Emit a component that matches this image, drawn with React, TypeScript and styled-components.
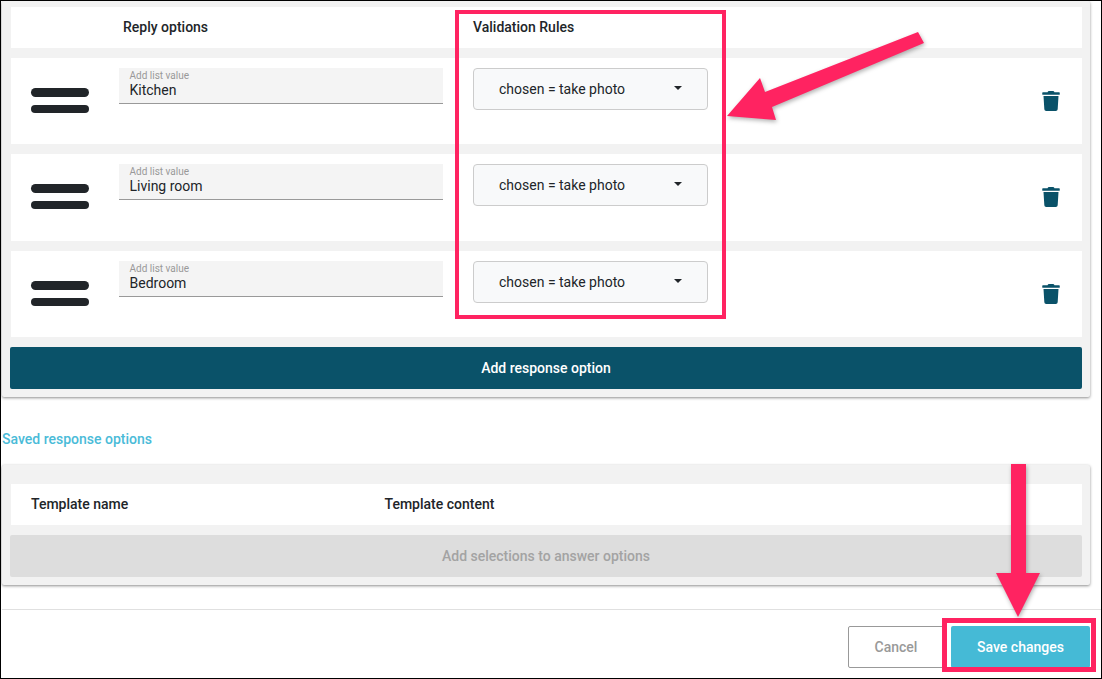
import React from 'react';
import styled, { createGlobalStyle } from 'styled-components';
import { FaTrash } from 'react-icons/fa';

const GlobalStyle = createGlobalStyle`
  html, body {
    margin: 0;
    padding: 0;
    background: #fff;
  }
  * {
    box-sizing: border-box;
  }
`;

const Frame = styled.div`
  position: relative;
  width: 1102px;
  height: 679px;
  overflow: hidden;
  border: 1px solid #000;
  background: #fff;
  font-family: Roboto, "Liberation Sans", sans-serif;
  font-size: 14px;
  color: #212529;
`;

const Content = styled.div`
  width: 1089px;
  padding-left: 1px;
`;

const Panel = styled.section<{ $top: number; $bottom: number }>`
  display: flex;
  flex-direction: column;
  gap: 10px;
  padding: ${(p) => p.$top}px 8px ${(p) => p.$bottom}px 8px;
  background: #f2f2f2;
  border-radius: 2px;
  box-shadow: 0 1px 3px rgba(0, 0, 0, 0.45);
`;

const HeaderRow = styled.div`
  display: flex;
  align-items: center;
  height: 41px;
  margin-left: 1px;
  padding-bottom: 2px;
  background: #fff;
  font-weight: 500;
`;

const HeaderCell = styled.div<{ $width: number }>`
  width: ${(p) => p.$width}px;
  flex: none;
`;

const OptionRow = styled.div<{ $height: number }>`
  display: grid;
  grid-template-columns: 108px 324px 30px 235px 1fr;
  height: ${(p) => p.$height}px;
  margin-left: 1px;
  padding-top: 10px;
  background: #fff;
`;

const Handle = styled.div`
  display: flex;
  flex-direction: column;
  gap: 8px;
  width: 58px;
  margin: 20px 0 0 20px;
`;

const HandleBar = styled.span`
  display: block;
  height: 8.5px;
  border-radius: 5px;
  background: #212529;
`;

const Field = styled.div`
  height: 36px;
  padding: 2px 10.5px 0;
  background: #f4f4f4;
  border-bottom: 1px solid #999;
`;

const FieldLabel = styled.div`
  font-size: 10px;
  line-height: 11px;
  color: #999;
`;

const FieldValue = styled.div`
  margin-top: 1px;
  font-size: 14px;
  line-height: 17px;
`;

const Select = styled.div`
  grid-column: 4;
  display: flex;
  align-items: center;
  justify-content: space-between;
  height: 42px;
  padding: 0 25px;
  background: #f8f9fa;
  border: 1px solid #ccc;
  border-radius: 4px;
`;

const Caret = styled.span`
  width: 0;
  height: 0;
  margin-top: -2px;
  border-left: 4px solid transparent;
  border-right: 4px solid transparent;
  border-top: 4px solid #212529;
`;

const DeleteCell = styled.div`
  display: flex;
  justify-content: flex-end;
  padding: 23px 21px 0 0;
  color: #0a5269;
  font-size: 20px;
`;

const WideButton = styled.div<{ $disabled?: boolean }>`
  display: flex;
  align-items: center;
  justify-content: center;
  height: 42px;
  border-radius: 2px;
  font-weight: 500;
  background: ${(p) => (p.$disabled ? '#dddddd' : '#0a5269')};
  color: ${(p) => (p.$disabled ? '#a3a3a3' : '#fff')};
`;

const SectionTitle = styled.div`
  margin: 33px 0 17px 0;
  height: 18px;
  line-height: 18px;
  font-weight: 500;
  color: #4abbd8;
`;

const Footer = styled.footer`
  display: flex;
  justify-content: flex-end;
  margin-top: 24px;
  padding: 16px 11px 0 0;
  border-top: 1px solid #e0e0e0;
  width: 1099px;
`;

const FooterButtons = styled.div`
  display: flex;
  gap: 7px;
`;

const FooterButton = styled.div<{ $primary?: boolean }>`
  display: flex;
  align-items: center;
  justify-content: center;
  height: 42px;
  width: ${(p) => (p.$primary ? '139px' : '96px')};
  border-radius: 2px;
  font-weight: 500;
  background: ${(p) => (p.$primary ? '#45bad6' : '#fff')};
  color: ${(p) => (p.$primary ? '#fff' : '#999')};
  border: ${(p) => (p.$primary ? 'none' : '1px solid #999')};
`;

const Highlight = styled.div<{ $x: number; $y: number; $w: number; $h: number; $line: number }>`
  position: absolute;
  left: ${(p) => p.$x}px;
  top: ${(p) => p.$y}px;
  width: ${(p) => p.$w}px;
  height: ${(p) => p.$h}px;
  border: ${(p) => p.$line}px solid #ff2361;
`;

const ArrowLayer = styled.svg`
  position: absolute;
  left: -1px;
  top: -1px;
  width: 1102px;
  height: 679px;
  pointer-events: none;
  filter: drop-shadow(1px 2px 2px rgba(0, 0, 0, 0.3));
`;

const options = [
  { name: 'Kitchen', height: 86 },
  { name: 'Living room', height: 87 },
  { name: 'Bedroom', height: 86 },
];

export default function App() {
  return (
    <Frame>
      <GlobalStyle />
      <Content>
        <Panel $top={6} $bottom={8}>
          <HeaderRow>
            <HeaderCell $width={112} />
            <HeaderCell $width={350}>Reply options</HeaderCell>
            <HeaderCell $width={200}>Validation Rules</HeaderCell>
          </HeaderRow>
          {options.map((option) => (
            <OptionRow key={option.name} $height={option.height}>
              <Handle>
                <HandleBar />
                <HandleBar />
              </Handle>
              <Field>
                <FieldLabel>Add list value</FieldLabel>
                <FieldValue>{option.name}</FieldValue>
              </Field>
              <Select>
                chosen = take photo
                <Caret />
              </Select>
              <DeleteCell>
                <FaTrash />
              </DeleteCell>
            </OptionRow>
          ))}
          <WideButton>Add response option</WideButton>
        </Panel>

        <SectionTitle>Saved response options</SectionTitle>

        <Panel $top={19} $bottom={8}>
          <HeaderRow>
            <HeaderCell $width={20} />
            <HeaderCell $width={353.5}>Template name</HeaderCell>
            <HeaderCell $width={200}>Template content</HeaderCell>
          </HeaderRow>
          <WideButton $disabled>Add selections to answer options</WideButton>
        </Panel>

        <Footer>
          <FooterButtons>
            <FooterButton>Cancel</FooterButton>
            <FooterButton $primary>Save changes</FooterButton>
          </FooterButtons>
        </Footer>
      </Content>

      <Highlight $x={454} $y={9} $w={271} $h={309} $line={4} />
      <Highlight $x={941} $y={617} $w={154} $h={54} $line={5} />
      <ArrowLayer viewBox="0 0 1102 679">
        <polygon fill="#ff2361" points="918,32 924,43 772,107 776,120 727,116 760,78 765,92" />
        <polygon fill="#ff2361" points="1011,464 1026,464 1026,573 1040,573 1018,617 996,573 1011,573" />
      </ArrowLayer>
    </Frame>
  );
}
